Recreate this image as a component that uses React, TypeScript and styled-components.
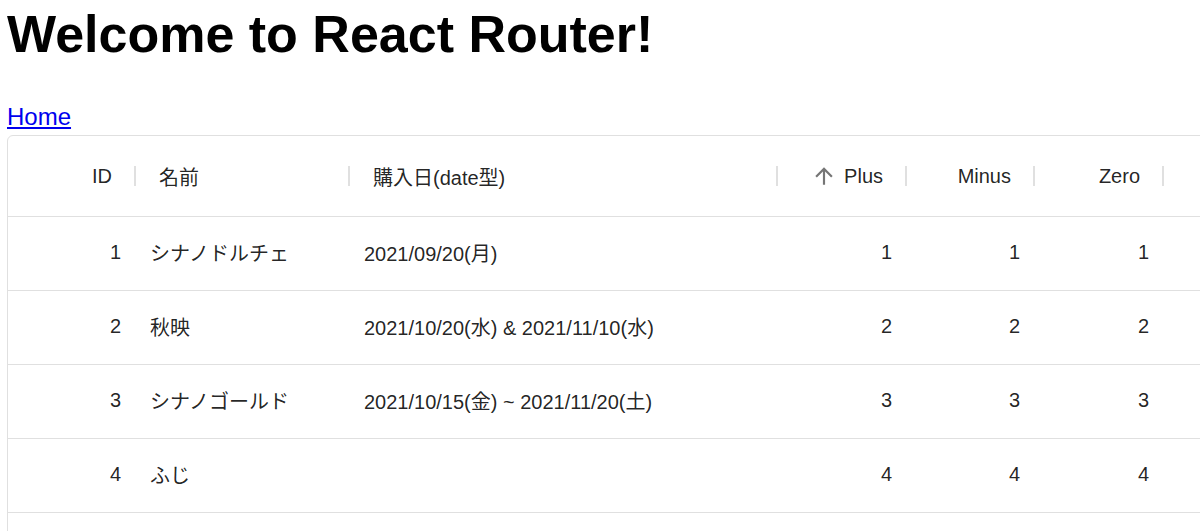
import styled, { createGlobalStyle } from "styled-components";

const GlobalStyle = createGlobalStyle`
  html, body {
    margin: 0;
    padding: 0;
    overflow: hidden;
    background: #fff;
  }
  body {
    font-family: "Liberation Sans", "Noto Sans CJK JP", sans-serif;
    color: #000;
  }
`;

type Align = "left" | "right";

type Column = {
  field: string;
  title: string;
  width: number;
  align: Align;
  sorted?: boolean;
};

const columns: Column[] = [
  { field: "id", title: "ID", width: 127, align: "right" },
  { field: "name", title: "名前", width: 214, align: "left" },
  { field: "date", title: "購入日(date型)", width: 428, align: "left" },
  { field: "plus", title: "Plus", width: 129, align: "right", sorted: true },
  { field: "minus", title: "Minus", width: 128, align: "right" },
  { field: "zero", title: "Zero", width: 129, align: "right" },
];

const rows = [
  { id: 1, name: "シナノドルチェ", date: "2021/09/20(月)", plus: 1, minus: 1, zero: 1 },
  { id: 2, name: "秋映", date: "2021/10/20(水) & 2021/11/10(水)", plus: 2, minus: 2, zero: 2 },
  { id: 3, name: "シナノゴールド", date: "2021/10/15(金) ~ 2021/11/20(土)", plus: 3, minus: 3, zero: 3 },
  { id: 4, name: "ふじ", date: "", plus: 4, minus: 4, zero: 4 },
];

const template = columns.map((c) => `${c.width}px`).join(" ") + " 1fr";

const ArrowUp = () => (
  <SortIcon viewBox="0 0 24 24" aria-hidden="true">
    <path d="M4 12l1.41 1.41L11 7.83V20h2V7.83l5.58 5.59L20 12l-8-8-8 8z" />
  </SortIcon>
);

const App = () => {
  return (
    <Page>
      <GlobalStyle />
      <Title>Welcome to React Router!</Title>
      <Nav>
        <HomeLink href="#">Home</HomeLink>
      </Nav>
      <Grid>
        <HeaderRow>
          {columns.map((c) => (
            <HeaderCell key={c.field} align={c.align}>
              {c.sorted && <ArrowUp />}
              <HeaderTitle>{c.title}</HeaderTitle>
            </HeaderCell>
          ))}
          <Filler />
        </HeaderRow>
        {rows.map((r) => (
          <Row key={r.id}>
            {columns.map((c) => (
              <Cell key={c.field} align={c.align}>
                {String((r as any)[c.field])}
              </Cell>
            ))}
            <Filler />
          </Row>
        ))}
      </Grid>
    </Page>
  );
};

const Page = styled.div`
  padding: 4px 0 0 7px;
`;

const Title = styled.h1`
  margin: 0;
  font-size: 52px;
  line-height: 60px;
  font-weight: 700;
`;

const Nav = styled.div`
  margin-top: 35px;
  font-size: 24px;
  line-height: 36px;
`;

const HomeLink = styled.a`
  color: #0000ee;
  text-decoration: underline;
`;

const Grid = styled.div`
  width: 1230px;
  height: 420px;
  border: 1px solid #e0e0e0;
  border-radius: 6px;
  box-sizing: border-box;
  color: rgba(0, 0, 0, 0.87);
  font-size: 20px;
`;

const HeaderRow = styled.div`
  display: grid;
  grid-template-columns: ${template};
  height: 81px;
  border-bottom: 1px solid #e0e0e0;
  box-sizing: border-box;
`;

const HeaderCell = styled.div<{ align: Align }>`
  position: relative;
  display: flex;
  align-items: center;
  justify-content: ${(p) => (p.align === "right" ? "flex-end" : "flex-start")};
  padding: 0 23px 0 24px;
  font-weight: 400;
  min-width: 0;

  &::after {
    content: "";
    position: absolute;
    right: -1px;
    top: 30px;
    width: 2px;
    height: 20px;
    background: #e0e0e0;
  }
`;

const HeaderTitle = styled.span`
  white-space: nowrap;
`;

const SortIcon = styled.svg`
  width: 26px;
  height: 26px;
  fill: rgba(0, 0, 0, 0.54);
  margin-right: 7px;
  flex-shrink: 0;
`;

const Row = styled.div`
  display: grid;
  grid-template-columns: ${template};
  height: 74px;
  border-bottom: 1px solid #e0e0e0;
  box-sizing: border-box;
`;

const Cell = styled.div<{ align: Align }>`
  display: flex;
  align-items: center;
  justify-content: ${(p) => (p.align === "right" ? "flex-end" : "flex-start")};
  padding: 0 14px 2px 15px;
  white-space: nowrap;
  min-width: 0;
`;

const Filler = styled.div``;

export default App;
